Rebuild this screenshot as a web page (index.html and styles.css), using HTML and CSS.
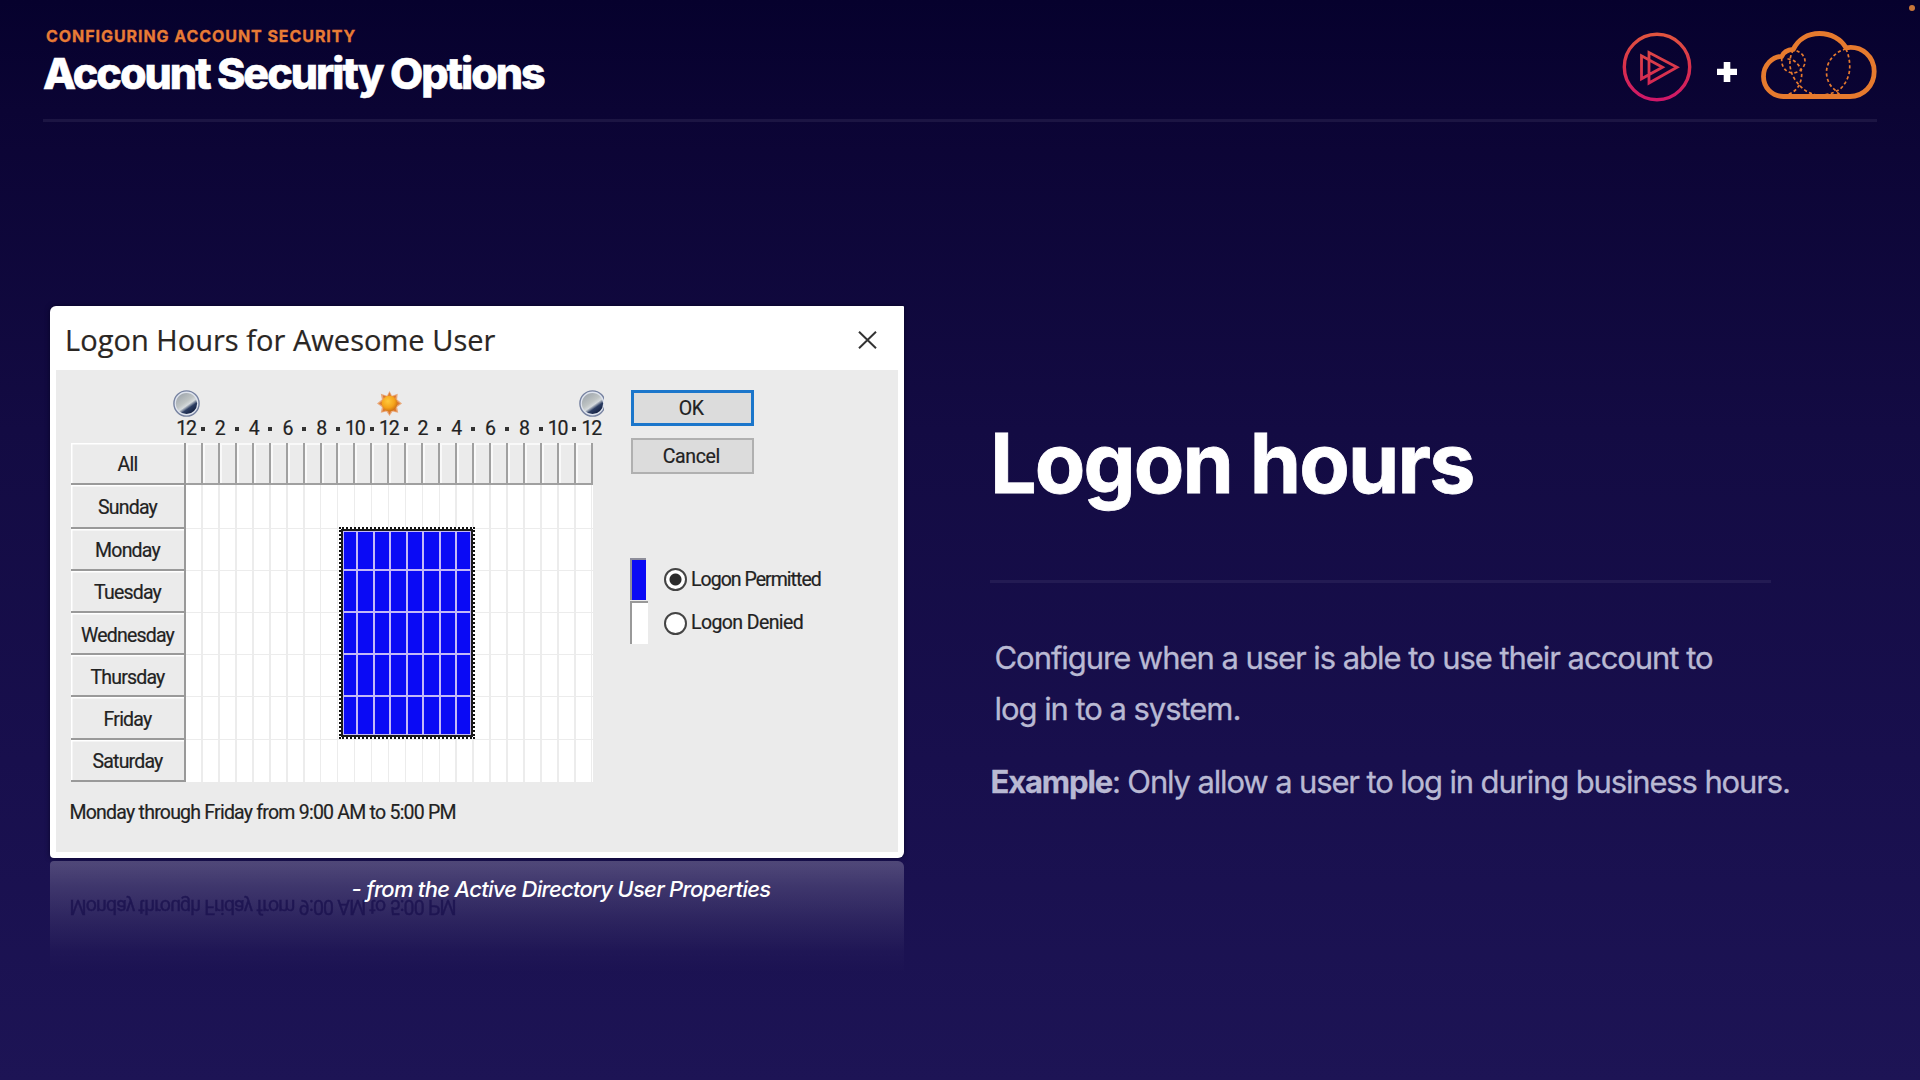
FILE: index.html
```html
<!DOCTYPE html>
<html lang="en">
<head>
<meta charset="utf-8">
<title>Account Security Options</title>
<link rel="stylesheet" href="styles.css">
</head>
<body>
<svg class="defs" width="0" height="0" aria-hidden="true">
  <defs>
    <linearGradient id="ring" x1="0" y1="0" x2="0" y2="1"><stop offset="0" stop-color="#e1543f"/><stop offset=".5" stop-color="#d82f4c"/><stop offset="1" stop-color="#cf1769"/></linearGradient>
    <linearGradient id="tri" gradientUnits="userSpaceOnUse" x1="0" y1="15" x2="0" y2="55"><stop offset="0" stop-color="#de4a43"/><stop offset="1" stop-color="#d42455"/></linearGradient>
    <linearGradient id="moonFill" x1=".2" y1=".1" x2=".8" y2=".95"><stop offset="0" stop-color="#a3aab0"/><stop offset=".4" stop-color="#bfc4c4"/><stop offset=".56" stop-color="#d5dadd"/><stop offset=".72" stop-color="#2c3d62"/><stop offset="1" stop-color="#101c3c"/></linearGradient>
    <radialGradient id="sunFill" cx=".4" cy=".35" r=".7"><stop offset="0" stop-color="#ffc93c"/><stop offset=".6" stop-color="#f5a31a"/><stop offset="1" stop-color="#c96a10"/></radialGradient>
    <symbol id="moon" viewBox="0 0 27 27">
      <circle cx="13.5" cy="13.5" r="12.6" fill="#dfe4ee" stroke="#7682a0" stroke-width="1.4"/>
      <circle cx="13.5" cy="13.5" r="10.6" fill="url(#moonFill)"/>
    </symbol>
  </defs>
</svg>
<div class="slide">
  <header class="header">
    <div class="titles">
      <p class="eyebrow">CONFIGURING ACCOUNT SECURITY</p>
      <h1 class="title">Account Security Options</h1>
    </div>
    <div class="brands">
      <svg class="play" width="70" height="70" viewBox="0 0 70 70" fill="none">
        <circle cx="35" cy="35" r="32.700" stroke="url(#ring)" stroke-width="3.400"/>
        <path d="M27 20.500V51L55 35.300zM19.500 23.800V46.800L40.500 35.300z" stroke="url(#tri)" stroke-width="2.800"/>
      </svg>
      <svg class="plus" width="20" height="20" viewBox="0 0 20 20"><path d="M6.700 0h6.600v6.700H20v6.300h-6.700V20H6.700v-7H0V6.700h6.700z" fill="#fff"/></svg>
      <svg class="cloud" width="116" height="69" viewBox="0 0 116 69" fill="none" stroke="#e67a2e">
        <path d="M22.500 65.500C10.500 65.500 2.500 56 2.500 45.500 2.500 34 11.500 25.600 20.800 25.400 22.500 21 27 18.800 32.300 18.400 37 8.500 46.500 2.500 58.500 2.500 70 2.500 80 8 85 16.800 101.500 14.200 113.200 26 113.200 40.500 113.200 54.500 102.500 65.500 89 65.500Z" stroke-width="4.800" stroke-linejoin="round"/>
        <g stroke-width="1.700" stroke-dasharray="3.200 2.400">
          <path d="M32.300 19C27 28 28 41 35 50 40 57 46 62 54 63.500"/>
          <path d="M20.800 27C20 35 24 41 31 42 38 42 43.500 37 44 31 44.400 25 39 20 32.300 19"/>
          <path d="M26.500 28C33 27.500 40.500 35 40.700 43 40.700 53 35 62 25.500 63.500"/>
          <path d="M85 18C75 20 65.500 30 65.500 41 65.500 50 70 56 74 59 76 61.500 77.500 63 79 63.500"/>
          <path d="M85 18C89 27 90 38 87 46 84 54 79 59 75.500 60 72 62 69 63 64.500 63.500"/>
        </g>
      </svg>
    </div>
    <span class="rec-dot"></span>
  </header>
  <main class="content">
    <figure class="figure">
      <section class="dialog">
        <div class="titlebar">
          <h2 class="dialog-title">Logon Hours for Awesome User</h2>
          <svg class="close" width="19" height="18" viewBox="0 0 19 18"><path d="M1 .8l17 16.400M18 .8L1 17.200" stroke="#333" stroke-width="2"/></svg>
        </div>
        <div class="dialog-body">
          <div class="schedule">
            <div class="sky">
              <svg width="27" height="27"><use href="#moon" width="27" height="27"/></svg>
              <svg width="25" height="25" viewBox="0 0 25 25">
                <path d="M12.500 0l2.500 4.800 5.700-2 -.6 5.600L25 12.500l-4.900 3.600 1.100 5.600-5.700-1.200L12.500 25l-3-4.500-5.700 1.200 1.100-5.600L0 12.500l4.900-4.100-1.100-5.600 6.200 2z" fill="#e9a878"/>
                <path d="M12.500 1.500l2 4.500 4.800-1.800-1.300 4.500 5 3.800-5 3.300 1.800 5-5.300-1.800-2 4.500-2-4.500-5.300 1.800 1.800-5-5-3.300 5-3.800-1.300-4.500 4.800 1.800z" fill="#dd7a30"/>
                <circle cx="12.500" cy="12.500" r="7.800" fill="url(#sunFill)"/>
              </svg>
              <svg width="25.500" height="27"><use href="#moon" width="27" height="27"/></svg>
            </div>
            <div class="scale">
              <span>12</span><b></b><span>2</span><b></b><span>4</span><b></b><span>6</span><b></b><span>8</span><b></b><span>10</span><b></b><span>12</span><b></b><span>2</span><b></b><span>4</span><b></b><span>6</span><b></b><span>8</span><b></b><span>10</span><b></b><span>12</span>
            </div>
            <div class="table">
              <div class="label">All</div>
              <div class="hours"><i></i><i></i><i></i><i></i><i></i><i></i><i></i><i></i><i></i><i></i><i></i><i></i><i></i><i></i><i></i><i></i><i></i><i></i><i></i><i></i><i></i><i></i><i></i><i></i></div>
              <div class="label">Sunday</div><div class="day"></div>
              <div class="label">Monday</div><div class="day"></div>
              <div class="label">Tuesday</div><div class="day"></div>
              <div class="label">Wednesday</div><div class="day"></div>
              <div class="label">Thursday</div><div class="day"></div>
              <div class="label">Friday</div><div class="day"></div>
              <div class="label">Saturday</div><div class="day last"></div>
              <div class="selection">
                <div class="cells"><i></i><i></i><i></i><i></i><i></i><i></i><i></i><i></i><i></i><i></i><i></i><i></i><i></i><i></i><i></i><i></i><i></i><i></i><i></i><i></i><i></i><i></i><i></i><i></i><i></i><i></i><i></i><i></i><i></i><i></i><i></i><i></i><i></i><i></i><i></i><i></i><i></i><i></i><i></i><i></i></div>
              </div>
            </div>
            <p class="summary">Monday through Friday from 9:00 AM to 5:00 PM</p>
          </div>
          <div class="controls">
            <button class="btn primary">OK</button>
            <button class="btn">Cancel</button>
            <div class="legend">
              <span class="swatch permitted"></span>
              <span class="option"><span class="radio checked"></span>Logon Permitted</span>
              <span class="swatch denied"></span>
              <span class="option loose"><span class="radio"></span>Logon Denied</span>
            </div>
          </div>
        </div>
      </section>
      <div class="reflection" aria-hidden="true"><p class="summary mirrored">Monday through Friday from 9:00 AM to 5:00 PM</p></div>
      <figcaption class="caption">- from the Active Directory User Properties</figcaption>
    </figure>
    <article class="copy">
      <h2 class="topic">Logon hours</h2>
      <p class="text lead">Configure when a user is able to use their account to<br>log in to a system.</p>
      <p class="text example"><strong>Example</strong>: Only allow a user to log in during business hours.</p>
    </article>
  </main>
</div>
</body>
</html>
```
FILE: styles.css
```css
* { box-sizing: border-box; }
body, h1, h2, p, figure { margin: 0; }
body { background: #1d1355; overflow: hidden; }
.defs { position: absolute; }

.slide {
  position: relative;
  width: 1920px;
  height: 1080px;
  background: linear-gradient(#06012d 0, #0b0434 110px, #130b43 430px, #180f4d 760px, #1d1455 1080px);
  font-family: Inter, "Liberation Sans", sans-serif;
  color: #fff;
}

/* Header */
.header {
  display: flex;
  justify-content: space-between;
  height: 122px;
  margin: 0 43px;
  padding-top: 26px;
  border-bottom: 3px solid #1c1543;
}
.eyebrow {
  padding-left: 3px;
  font-size: 16px;
  font-weight: 700;
  line-height: 20px;
  letter-spacing: 0.94px;
  color: #e87b35;
  -webkit-text-stroke: 0.3px;
}
.title {
  margin-top: 2px;
  font-size: 43px;
  font-weight: 800;
  line-height: 50px;
  letter-spacing: -2px;
  -webkit-text-stroke: 0.6px;
}
.brands { display: flex; align-items: flex-start; }
.play { margin-top: 5.500px; }
.plus { margin: 36px 24px 0 25px; }
.cloud { margin-top: 5px; }
.rec-dot {
  position: absolute;
  top: 5px;
  right: 5px;
  width: 6px;
  height: 6px;
  border-radius: 50%;
  background: #c8763a;
}

/* Columns */
.content { display: flex; padding: 184px 0 0 50px; }
.figure { position: relative; width: 854px; }
.caption {
  position: absolute;
  left: 301.500px;
  top: 570px;
  font-size: 22px;
  font-style: italic;
  font-weight: 500;
  line-height: 26px;
  letter-spacing: -0.71px;
  white-space: nowrap;
}

/* Dialog */
.dialog {
  height: 552px;
  padding: 0 6px 6px;
  border-radius: 6px 1px 6px 4px;
  background: #fff;
  box-shadow: 0 0 5px rgba(4, 0, 30, 0.7);
  color: #222;
}
.titlebar {
  display: flex;
  justify-content: space-between;
  align-items: center;
  height: 64px;
  padding: 4px 21.500px 0 9px;
}
.dialog-title {
  font: 400 29px/40px "Open Sans", "Noto Sans", sans-serif;
  letter-spacing: 0.03px;
  color: #2a2623;
  -webkit-text-stroke: 0.2px;
}
.close { margin-bottom: 1px; }
.dialog-body {
  display: flex;
  height: 482px;
  padding-left: 15px;
  background: #ebebeb;
  font: 400 19.500px/24px Roboto, "Liberation Sans", sans-serif;
  letter-spacing: -0.8px;
  -webkit-text-stroke: 0.2px;
}
.schedule { width: 558.500px; }
.sky {
  display: flex;
  justify-content: space-between;
  align-items: center;
  width: 431.500px;
  margin: 19.500px 0 0 101.500px;
}
.scale {
  display: grid;
  grid-template-columns: repeat(25, 16.900px);
  height: 24px;
  margin: 0 0 0 106.500px;
  letter-spacing: -1.200px;
}
.scale span { display: flex; justify-content: center; }
.scale b { width: 4px; height: 4px; margin: 10px auto 0; background: #333; }

.table {
  position: relative;
  display: grid;
  grid-template-columns: 115px 406.500px;
  grid-template-rows: 42px 44px 42px 42.400px 42.300px 42.300px 42.200px 42.300px;
  margin-top: 2px;
}
.label {
  display: flex;
  align-items: center;
  justify-content: center;
  border: solid #999;
  border-width: 0 2px 2px 0;
  box-shadow: inset 1.500px 1.500px 0 #fff;
  padding-top: 5px;
  background: #ebebeb;
}
.hours { display: grid; grid-template-columns: repeat(24, 1fr); }
.hours i {
  border: solid #a0a0a0;
  border-width: 0 2px 2px 0;
  box-shadow: inset 2px 2px 0 #f9f9f9;
}
.day {
  border-bottom: 1.500px solid #ececec;
  background: repeating-linear-gradient(90deg, #fff 0 15.400px, #ececec 15.400px 16.937px);
}
.day.last { border-bottom: 0; }

/* Highlighted block, laid over the hour cells */
.selection {
  position: absolute;
  left: 267.500px;
  top: 84px;
  width: 136px;
  height: 212px;
  border: 2px dotted #111;
  background: #fff;
}
.cells {
  display: grid;
  grid-template-columns: 12.500px repeat(6, 1fr) 12.500px;
  grid-template-rows: 37px repeat(3, 1fr) 37px;
  gap: 2px;
  height: 100%;
  padding: 1px;
  border: 2px solid #1a1a1a;
  background: #c3b8f7;
}
.cells i { background: #0a0af5; }
.summary {
  margin-top: 19.500px;
  letter-spacing: -0.77px;
  white-space: nowrap;
}
.schedule .summary { margin-left: -1.500px; }

.controls { width: 240px; padding-top: 20px; }
.btn {
  display: block;
  width: 123.500px;
  height: 36px;
  margin: 0 0 11.500px 1px;
  padding: 2px 2px 0 0;
  border: 2px solid #b0b0b0;
  background: #dcdcdc;
  font: inherit;
  letter-spacing: -0.4px;
  color: #222;
}
.btn.primary { border: 3px solid #1b76cb; }
.legend {
  display: grid;
  grid-template-columns: 18px 1fr;
  grid-template-rows: 43px 43px;
  column-gap: 16px;
  margin-top: 84.500px;
  letter-spacing: -0.97px;
}
.swatch { border: solid #999; border-width: 2px 0 0 2px; background: #fff; }
.swatch.permitted { margin: 0 2px 1px 0; background: #0a0af5; border-color: #8d8d9a; }
.option { display: flex; align-items: center; gap: 4.500px; white-space: nowrap; }
.option.loose { padding-top: 1.500px; letter-spacing: -0.6px; }
.radio {
  width: 23px;
  height: 23px;
  border: 2px solid #444;
  border-radius: 50%;
  background: #fff;
}
.radio.checked { background: radial-gradient(circle, #2b2b2b 0 5.500px, #fff 6.500px); }

/* Mirrored glow below the dialog */
.reflection {
  height: 112px;
  margin-top: 3px;
  padding: 33px 0 0 19.500px;
  border-radius: 4px 6px 0 0;
  background: linear-gradient(rgba(255, 250, 255, 0.24), rgba(255, 250, 255, 0.16) 25px, rgba(255, 250, 255, 0.08) 60px, rgba(255, 250, 255, 0.02) 90px, transparent);
}
.mirrored {
  margin: 0;
  font: 400 19.500px/24px Roboto, "Liberation Sans", sans-serif;
  letter-spacing: -0.77px;
  color: #1c1350;
  opacity: 0.85;
  filter: blur(0.6px);
  transform: scaleY(-1);
  -webkit-text-stroke: 0.4px;
}

/* Copy */
.copy { margin-left: 86px; padding-top: 107px; }
.topic {
  width: 781px;
  height: 170px;
  border-bottom: 3px solid #231b53;
  font-size: 82.500px;
  font-weight: 700;
  line-height: 100px;
  letter-spacing: -1.85px;
  -webkit-text-stroke: 0.8px;
}
.text {
  font-size: 31px;
  line-height: 51px;
  letter-spacing: -1.05px;
  white-space: nowrap;
  color: #b9b9d3;
  -webkit-text-stroke: 0.3px;
}
.lead { margin-top: 49px; padding-left: 4.500px; }
.example { margin-top: 22px; padding-left: 0.5px; letter-spacing: -1.14px; }
.example strong { font-weight: 700; }
```
